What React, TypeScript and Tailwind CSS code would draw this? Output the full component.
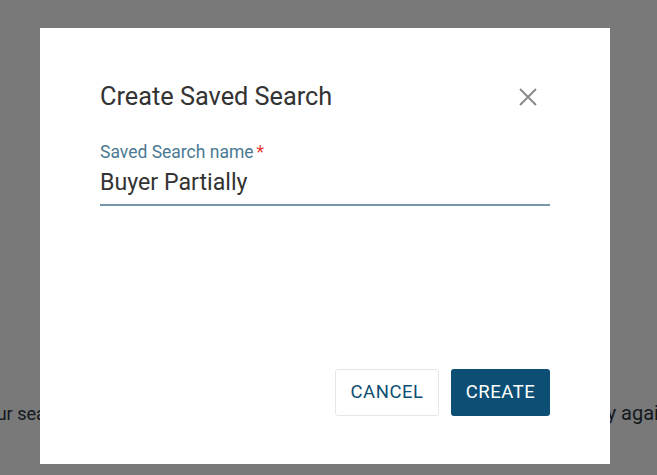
import React, { useState, useEffect, useRef } from 'react';

const App: React.FC = () => {
  const [name, setName] = useState('Buyer Partially');
  const inputRef = useRef<HTMLInputElement>(null);

  useEffect(() => {
    const el = inputRef.current;
    if (el) {
      el.focus();
      el.setSelectionRange(el.value.length, el.value.length);
    }
  }, []);

  return (
    <div className="relative w-[657px] h-[475px] overflow-hidden bg-white font-['Roboto',sans-serif]">
      {/* Page behind the dialog */}
      <div className="pt-[398px] flex justify-between items-baseline whitespace-nowrap text-[#2a3642]">
        <span className="-ml-[22px] text-[18px]">your search</span>
        <span className="-mr-[13px] text-[20px]">try again</span>
      </div>

      {/* Backdrop */}
      <div className="absolute inset-0 bg-black/[0.525]">
        <div className="ml-[40px] mt-[28px] w-[570px] h-[436px] bg-white flex flex-col pt-[54px] pb-[48px] px-[60px]">
          <div className="flex items-center justify-between h-[30px]">
            <h2 className="text-[25.3px] leading-[30px] text-[#333333]">Create Saved Search</h2>
            <button className="w-[24px] h-[24px] flex items-center justify-center mr-[10px] text-[#8a8a8a]">
              <svg width="18" height="18" viewBox="0 0 18 18" fill="none" stroke="currentColor" strokeWidth="2">
                <path d="M1 1L17 17M17 1L1 17" />
              </svg>
            </button>
          </div>

          <label className="mt-[30px] text-[17.5px] leading-[20px] text-[#4a7a92]">
            Saved Search name<span className="ml-[3px] text-[#e53935]">*</span>
          </label>
          <div className="relative mt-[4px]">
            <input
              ref={inputRef}
              value={name}
              onChange={(e) => setName(e.target.value)}
              className="w-full h-[40px] pb-[6px] text-[23.2px] text-[#333333] caret-[#333333] outline-none border-b-2 border-[#7496a6] bg-transparent"
            />
          </div>

          <div className="mt-auto flex justify-end gap-[12px]">
            <button className="h-[47px] w-[104px] border border-[#e6e6e6] rounded-[3px] text-[18.5px] tracking-[0.5px] text-[#0d4f74] bg-white">
              CANCEL
            </button>
            <button className="h-[47px] w-[99px] rounded-[3px] text-[18.5px] tracking-[0.5px] text-white bg-[#0d4f74]">
              CREATE
            </button>
          </div>
        </div>
      </div>
    </div>
  );
};

export default App;
